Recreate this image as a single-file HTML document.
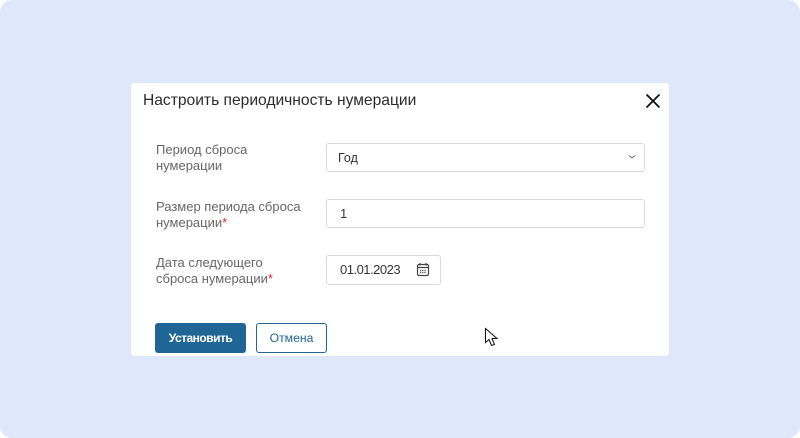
<!DOCTYPE html>
<html lang="ru">
<head>
<meta charset="utf-8">
<style>
html,body{margin:0;padding:0;background:#fff;}
body{width:800px;height:438px;overflow:hidden;position:relative;font-family:"Liberation Sans",sans-serif;}
.bg{position:absolute;left:0;top:0;width:800px;height:438px;background:#dfe7fa;border-radius:12px;}
.modal{position:absolute;left:131px;top:83px;width:538px;height:273px;background:#fff;border-radius:4px;}
.t{position:absolute;white-space:nowrap;}
.title{left:143px;top:92px;font-size:15.6px;line-height:18px;color:#2b2b2b;}
.lab{left:156px;font-size:13px;line-height:16px;color:#666;}
.lab b{color:#d8232a;font-weight:400;}
.inp{position:absolute;box-sizing:border-box;background:#fff;border:1px solid #d9d9d9;border-radius:3px;}
.val{font-size:13px;line-height:16px;color:#333;}
.btn{position:absolute;box-sizing:border-box;top:323px;height:30px;border-radius:3px;font-size:12.5px;line-height:28px;text-align:center;}
svg{position:absolute;}
</style>
</head>
<body>
<div class="bg"></div>
<div class="modal"></div>
<div class="t title">Настроить периодичность нумерации</div>
<svg style="left:645px;top:93px" width="16" height="16" viewBox="0 0 16 16"><path d="M1.500 1.500L14.500 14.500M14.500 1.500L1.500 14.500" stroke="#111" stroke-width="1.800" fill="none"/></svg>

<div class="t lab" style="top:142px">Период сброса<br>нумерации</div>
<div class="inp" style="left:326px;top:143px;width:319px;height:29px"></div>
<div class="t val" style="left:338px;top:150px;font-size:12.500px">Год</div>
<svg style="left:627px;top:153px" width="10" height="8" viewBox="0 0 10 8"><path d="M2 2.500L5 5L8 2.500" stroke="#666" stroke-width="1" fill="none"/></svg>

<div class="t lab" style="top:199px">Размер периода сброса<br>нумерации<b>*</b></div>
<div class="inp" style="left:326px;top:199px;width:319px;height:29px"></div>
<div class="t val" style="left:340px;top:206px">1</div>

<div class="t lab" style="top:255px">Дата следующего<br>сброса нумерации<b>*</b></div>
<div class="inp" style="left:326px;top:255px;width:115px;height:30px"></div>
<div class="t val" style="left:340px;top:262px;letter-spacing:-.5px">01.01.2023</div>
<svg style="left:416px;top:262px" width="14" height="15" viewBox="0 0 14 15"><rect x="1.500" y="2.500" width="11" height="11" rx="1.500" fill="none" stroke="#444" stroke-width="1.200"/><path d="M1.500 5.500H12.500M4 1V3.500M10 1V3.500" stroke="#444" stroke-width="1.200" fill="none"/><path d="M4 8.500H10M4 10.500H10" stroke="#444" stroke-width="1.300" stroke-dasharray="1.200 1" fill="none"/></svg>

<div class="btn" style="left:155px;width:91px;background:#1f6696;color:#fff;font-weight:700;font-size:12px;line-height:30px;letter-spacing:-.5px">Установить</div>
<div class="btn" style="left:256px;width:71px;background:#fff;border:1px solid #1f6696;color:#1f6696;font-size:12.200px">Отмена</div>

<svg style="left:484px;top:327px" width="16" height="21" viewBox="0 0 16 21"><path d="M1.500 1.500V15.500L5 12.500L7.500 18.500L10.500 17.500L8 11.500H13Z" fill="#fff" stroke="#111" stroke-width="1"/></svg>
</body>
</html>
